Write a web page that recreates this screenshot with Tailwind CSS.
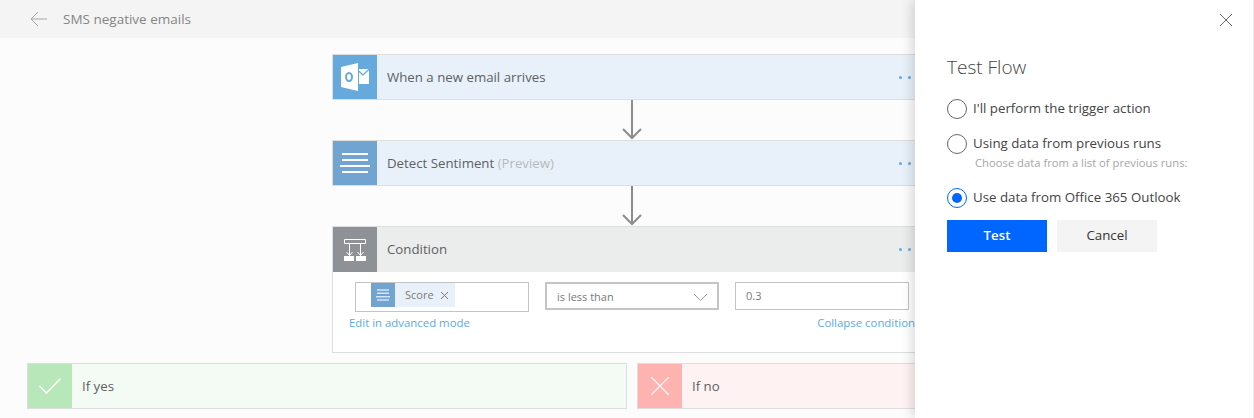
<!DOCTYPE html>
<html lang="en">
<head>
  <meta charset="UTF-8">
  <title>SMS negative emails</title>
  <script src="https://cdn.jsdelivr.net/npm/@tailwindcss/browser@4"></script>
</head>
<body class="bg-[#fcfcfc] font-['Open_Sans',sans-serif] text-[13.25px] text-[#5f5f5f]">
  <div class="relative h-[418px] w-[1254px] overflow-hidden">
    <!-- Header -->
    <div class="flex h-[38px] items-center bg-[#f4f4f4]">
      <svg class="ml-[30px] h-[16px] w-[17px] shrink-0" viewBox="0 0 17 16" fill="none" stroke="#a6a6a6" stroke-width="1"><path d="M17 8H1M8 1 1 8l7 7"/></svg>
      <span class="ml-[16px] pt-[1px] text-[13.5px] text-[#858585]">SMS negative emails</span>
    </div>

    <div class="ml-[332px] mt-[16px] w-[600px]">
      <!-- Trigger -->
      <div class="flex h-[46px] border border-[#dedede] bg-[#e8f1f9]">
        <div class="flex w-[44px] shrink-0 items-center justify-center bg-[#66a9dd]">
          <svg class="h-[28px] w-[28px]" viewBox="0 0 28 28" fill="#fff">
            <path d="M0 4 17 0v28L0 24z"/>
            <path d="M18 6h10v15H18z"/>
            <path d="M18 7.500l4 3.500 6-5.500v1.800l-6 5.500-4-3.500z" fill="#66a9dd"/>
            <ellipse cx="8" cy="14" rx="3" ry="4" fill="none" stroke="#66a9dd" stroke-width="2"/>
          </svg>
        </div>
        <span class="ml-[10px] self-center pt-[1px]">When a new email arrives</span>
        <span class="ml-auto mr-[20px] flex items-center gap-[6px]">
          <i class="h-[3px] w-[3px] rounded-full bg-[#66a9dd]"></i><i class="h-[3px] w-[3px] rounded-full bg-[#66a9dd]"></i>
        </span>
      </div>

      <svg class="mx-auto block h-[40px] w-[22px]" viewBox="0 0 22 40" fill="none" stroke="#8c8c8c" stroke-width="2"><path d="M11 0v38M2 29l9 9 9-9"/></svg>

      <!-- Detect Sentiment -->
      <div class="flex h-[46px] border border-[#dedede] bg-[#e8f1f9]">
        <div class="flex w-[44px] shrink-0 items-center justify-center bg-[#71a4d1]">
          <svg class="h-[22px] w-[30px]" viewBox="0 0 30 22" stroke="#fff" stroke-width="2"><path d="M2 2h26M2 8h26M0 14h30M2 20h26"/></svg>
        </div>
        <span class="ml-[10px] self-center pt-[1px]">Detect Sentiment <span class="text-[#b9b9b9]">(Preview)</span></span>
        <span class="ml-auto mr-[20px] flex items-center gap-[6px]">
          <i class="h-[3px] w-[3px] rounded-full bg-[#66a9dd]"></i><i class="h-[3px] w-[3px] rounded-full bg-[#66a9dd]"></i>
        </span>
      </div>

      <svg class="mx-auto block h-[40px] w-[22px]" viewBox="0 0 22 40" fill="none" stroke="#8c8c8c" stroke-width="2"><path d="M11 0v38M2 29l9 9 9-9"/></svg>

      <!-- Condition -->
      <div class="h-[127px] border border-[#dedede] bg-white">
        <div class="flex h-[45px] bg-[#ebecec]">
          <div class="flex w-[44px] shrink-0 items-center justify-center bg-[#8e9196]">
            <svg class="h-[24px] w-[24px]" viewBox="0 0 24 24" fill="none" stroke="#fff">
              <path d="M1.500 1.500h21v4h-21zM6.500 5.500v12M17.500 5.500v12M3.500 14l3 3.500 3-3.500M14.500 14l3 3.500 3-3.500"/>
              <path d="M1 18h10v5H1zM13 18h10v5H13z" fill="#fff" stroke="none"/>
            </svg>
          </div>
          <span class="ml-[10px] self-center">Condition</span>
          <span class="ml-auto mr-[20px] flex items-center gap-[6px]">
            <i class="h-[3px] w-[3px] rounded-full bg-[#66a9dd]"></i><i class="h-[3px] w-[3px] rounded-full bg-[#66a9dd]"></i>
          </span>
        </div>
        <div class="ml-[22px] mt-[10px] flex items-start gap-[16px] text-[11px] text-[#7a7a7a]">
          <div class="flex h-[30px] w-[174px] items-start border border-[#c4c4c4] pl-[15px]">
            <div class="flex h-[24px] w-[84px] items-center bg-[#e8f1f9]">
              <div class="flex h-full w-[24px] items-center justify-center bg-[#71a4d1]">
                <svg class="h-[12px] w-[14px]" viewBox="0 0 14 12" stroke="#d5e4f1" stroke-width="1.500"><path d="M1 1h12M1 4.300h12M0 7.700h14M1 11h12"/></svg>
              </div>
              <span class="ml-[10px] pt-[1px]">Score</span>
              <svg class="ml-[7px] h-[7px] w-[7px]" viewBox="0 0 7 7" stroke="#777" stroke-width="1"><path d="M0 0l7 7M7 0 0 7"/></svg>
            </div>
          </div>
          <div class="flex h-[28px] w-[174px] items-center justify-between border-2 border-[#c4c4c4] px-[10px] pt-[2px]">
            <span>is less than</span>
            <svg class="h-[7px] w-[13px]" viewBox="0 0 13 7" fill="none" stroke="#9a9a9a"><path d="M0 0l6.500 6.500L13 0"/></svg>
          </div>
          <div class="flex h-[28px] w-[174px] items-center border border-[#c4c4c4] pl-[10px]">0.3</div>
        </div>
        <div class="mt-[2px] flex justify-between pl-[16px] pr-[16px] text-[11.4px] text-[#5aaae6]">
          <span>Edit in advanced mode</span>
          <span>Collapse condition</span>
        </div>
      </div>
    </div>

    <!-- Branches -->
    <div class="ml-[27px] mt-[10px] flex gap-[10px]">
      <div class="flex h-[46px] w-[600px] border border-[#dedede] bg-[#f4fbf4]">
        <div class="flex w-[44px] shrink-0 items-center justify-center bg-[#b8e8b9]">
          <svg class="h-[16px] w-[22px]" viewBox="0 0 22 16" fill="none" stroke="#fff" stroke-width="1.500"><path d="M0.500 8l7 7L21.500 0.500"/></svg>
        </div>
        <span class="ml-[10px] self-center pt-[1px]">If yes</span>
      </div>
      <div class="flex h-[46px] w-[600px] border border-[#dedede] bg-[#fef3f2]">
        <div class="flex w-[44px] shrink-0 items-center justify-center bg-[#ffb3b0]">
          <svg class="h-[18px] w-[18px]" viewBox="0 0 18 18" fill="none" stroke="#fff" stroke-width="1.200"><path d="M0 0l18 18M18 0 0 18"/></svg>
        </div>
        <span class="ml-[10px] self-center pt-[1px]">If no</span>
      </div>
    </div>

    <!-- Test Flow panel -->
    <div class="absolute right-0 top-0 h-full w-[339px] border-r border-[#eeeeee] bg-white pl-[32px] text-[13.3px] shadow-[-4px_0_10px_rgba(0,0,0,0.13)]">
      <svg class="absolute right-[21px] top-[14px] h-[12px] w-[12px]" viewBox="0 0 12 12" stroke="#666" stroke-width="1"><path d="M0 0l12 12M12 0 0 12"/></svg>
      <h2 class="pt-[53px] text-[19px] leading-[28px] font-light text-[#444]">Test Flow</h2>
      <div class="mt-[18px] flex items-center gap-[6px] text-[#444]">
        <span class="h-[20px] w-[20px] rounded-full border border-[#666]"></span>
        <span>I'll perform the trigger action</span>
      </div>
      <div class="mt-[15px] flex items-center gap-[6px] text-[#444]">
        <span class="h-[20px] w-[20px] rounded-full border border-[#666]"></span>
        <span>Using data from previous runs</span>
      </div>
      <div class="ml-[28px] mt-[2px] text-[11.25px] leading-[14px] text-[#a6a6a6]">Choose data from a list of previous runs:</div>
      <div class="mt-[18px] flex items-center gap-[6px] text-[#444]">
        <span class="flex h-[20px] w-[20px] items-center justify-center rounded-full border border-[#0066ff]"><span class="h-[10px] w-[10px] rounded-full bg-[#0066ff]"></span></span>
        <span>Use data from Office 365 Outlook</span>
      </div>
      <div class="mt-[12px] flex gap-[10px]">
        <button class="h-[32px] w-[100px] bg-[#0066ff] font-semibold text-white">Test</button>
        <button class="h-[32px] w-[100px] bg-[#f4f4f4] text-[#333]">Cancel</button>
      </div>
    </div>
  </div>
</body>
</html>
